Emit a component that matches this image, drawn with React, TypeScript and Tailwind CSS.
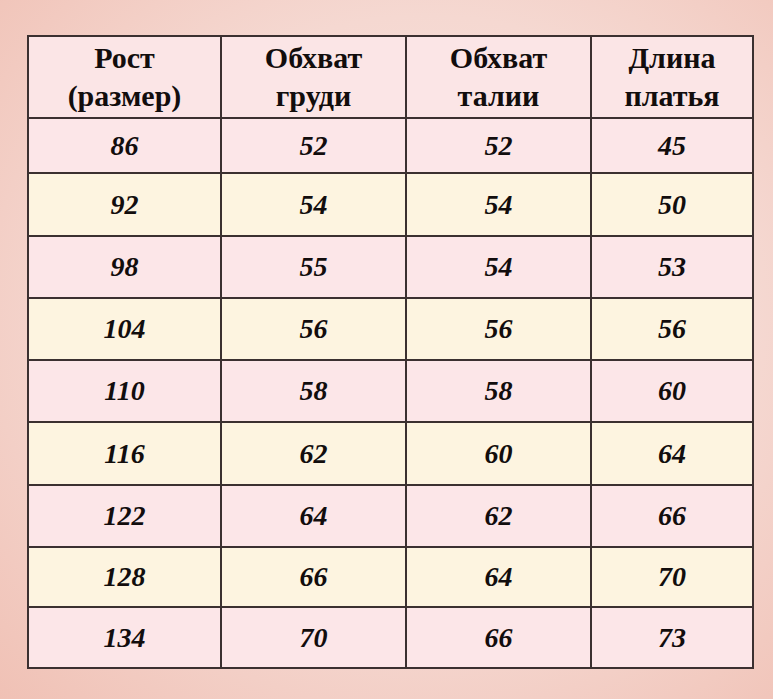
const header = ["Рост (размер)", "Обхват груди", "Обхват талии", "Длина платья"];

const header2 = [
  ["Рост", "(размер)"],
  ["Обхват", "груди"],
  ["Обхват", "талии"],
  ["Длина", "платья"],
];

const rows = [
  { h: "h-[55px]", v: ["86", "52", "52", "45"] },
  { h: "h-[63px]", v: ["92", "54", "54", "50"] },
  { h: "h-[62px]", v: ["98", "55", "54", "53"] },
  { h: "h-[62px]", v: ["104", "56", "56", "56"] },
  { h: "h-[62px]", v: ["110", "58", "58", "60"] },
  { h: "h-[63px]", v: ["116", "62", "60", "64"] },
  { h: "h-[62px]", v: ["122", "64", "62", "66"] },
  { h: "h-[60px]", v: ["128", "66", "64", "70"] },
  { h: "h-[61px]", v: ["134", "70", "66", "73"] },
];

const widths = ["w-[193px]", "w-[185px]", "w-[185px]", "w-[162px]"];

export default function App() {
  return (
    <div
      className="w-[773px] h-[699px] overflow-hidden bg-[radial-gradient(ellipse_at_55%_45%,#f8e6e2_0%,#f5d8d1_55%,#f0c1b5_100%)] pt-[35px] pl-[27px]"
      style={{ fontFamily: '"Liberation Serif", "Times New Roman", serif' }}
      aria-label={header.join(", ")}
    >
      <table className="border-collapse border-2 border-[#3b3030] text-[#120d0d]">
        <thead>
          <tr className="h-[82px] bg-[#fbe5e6]">
            {header2.map((c, i) => (
              <th
                key={i}
                className={`${widths[i]} border-2 border-[#3b3030] p-0 text-center align-middle font-bold text-[30px] leading-[38px]`}
              >
                <div>{c[0]}</div>
                <div>{c[1]}</div>
              </th>
            ))}
          </tr>
        </thead>
        <tbody>
          {rows.map((r, ri) => (
            <tr key={ri} className={`${r.h} ${ri % 2 === 0 ? "bg-[#fce6e8]" : "bg-[#fdf4e0]"}`}>
              {r.v.map((v, ci) => (
                <td
                  key={ci}
                  className="border-2 border-[#3b3030] p-0 text-center align-middle font-bold italic text-[28px] leading-none"
                >
                  {v}
                </td>
              ))}
            </tr>
          ))}
        </tbody>
      </table>
    </div>
  );
}
